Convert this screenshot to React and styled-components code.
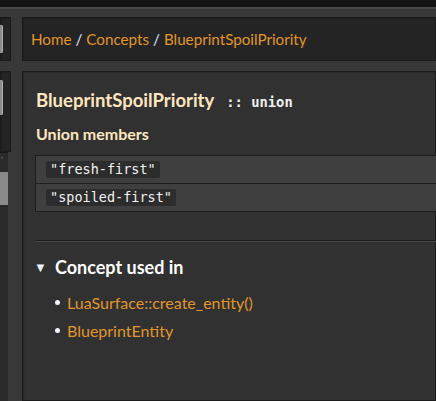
import styled, { createGlobalStyle } from 'styled-components'

const Global = createGlobalStyle`
  html, body {
    margin: 0;
    padding: 0;
    background: #383838;
    overflow: hidden;
  }
  body {
    font-family: Lato, "Noto Sans", sans-serif;
  }
`

const TopStrip = styled.div`
  height: 7px;
  background: #141414;
  border-bottom: 2px solid #474747;
`

const Frame = styled.div`
  display: grid;
  grid-template-columns: 11px 1fr;
  column-gap: 11px;
  padding-top: 8px;
  height: 392px;
  box-sizing: border-box;
`

const Side = styled.div`
  display: flex;
  flex-direction: column;
  min-width: 0;
`

const Main = styled.div`
  display: flex;
  flex-direction: column;
  gap: 10px;
  min-width: 0;
`

const Panel = styled.div`
  background: ${p => (p.dark ? '#242424' : '#313131')};
  box-shadow: inset 0 0 0 1px #1b1b1b, inset 1px 1px 2px #151515;
  overflow: hidden;
  position: relative;
`

const SideTop = styled(Panel)`
  height: 44px;
  margin-bottom: 10px;
  display: flex;
  align-items: center;
`

const SideMid = styled(Panel)`
  height: 81px;
  padding-top: 9px;
  box-sizing: border-box;
`

const SideBtn = styled.div`
  width: 3px;
  height: ${p => p.h}px;
  background: #8c8c8c;
  border-radius: 0 2px 2px 0;
  box-shadow: inset -1px 0 0 #b0b0b0;
`

const SideScroll = styled.div`
  flex: 1;
  display: flex;
  flex-direction: column;
  background: #2a2a2a;
  border-top: 1px solid #181818;
  width: 8px;
`

const ScrollArrow = styled.div`
  height: 19px;
  color: #6a6a6a;
  font-size: 8px;
  line-height: 12px;
`

const ScrollThumb = styled.div`
  height: 33px;
  background: #8a8a8a;
`

const Crumbs = styled(Panel)`
  height: 44px;
  display: flex;
  align-items: center;
  padding-left: 9px;
  font-size: 15.2px;
  color: #e8e8e8;
  white-space: nowrap;
`

const Crumb = styled.a`
  color: #e0962a;
  text-decoration: none;
`

const Sep = styled.span`
  color: #dfe8ff;
  margin: 0 4px;
`

const Content = styled(Panel)`
  flex: 1;
  padding: 18px 0 0 14px;
`

const TitleRow = styled.div`
  display: flex;
  align-items: baseline;
  gap: 12px;
`

const Title = styled.h1`
  margin: 0;
  font-size: 18.5px;
  font-weight: 700;
  color: #ffe6c0;
`

const TypeTag = styled.span`
  font-family: "DejaVu Sans Mono", monospace;
  font-size: 13.8px;
  font-weight: 600;
  color: #f0f0f0;
`

const SubHead = styled.h3`
  margin: 13px 0 12px;
  font-size: 16px;
  font-weight: 700;
  color: #ffe6c0;
`

const Table = styled.div`
  margin-left: -1px;
  border: 1px solid #1e1e1e;
  border-right: none;
  display: flex;
  flex-direction: column;
`

const Row = styled.div`
  height: 27px;
  background: #3f3f3f;
  display: flex;
  align-items: center;
  padding-left: 10px;
  border-top: ${p => (p.first ? 'none' : '1px solid #1e1e1e')};
`

const Code = styled.code`
  font-family: "DejaVu Sans Mono", monospace;
  font-size: 13.5px;
  color: #f2f2f2;
  background: #2c2c2c;
  padding: 0 4px;
  line-height: 17px;
  border-radius: 2px;
`

const Divider = styled.div`
  margin: 28px 0 0 -1px;
  height: 1px;
  background: #1c1c1c;
  border-bottom: 1px solid #474747;
`

const Section = styled.div`
  display: flex;
  align-items: center;
  gap: 9px;
  margin: 14px 0 0 -2px;
  color: #ffffff;
`

const Arrow = styled.span`
  font-size: 13px;
  width: 12px;
  color: #e8f0ff;
`

const SectionTitle = styled.h2`
  margin: 0;
  font-size: 18px;
  font-weight: 700;
`

const List = styled.ul`
  margin: 10px 0 0;
  padding-left: 19px;
  list-style: none;
`

const Item = styled.li`
  display: flex;
  align-items: center;
  gap: 7px;
  height: 28px;
  font-size: 16px;
  &::before {
    content: '';
    width: 5px;
    height: 5px;
    border-radius: 50%;
    background: #f4f6ff;
  }
`

const Link = styled.a`
  color: #e0962a;
  text-decoration: none;
`

export default function App() {
  return (
    <>
      <Global />
      <TopStrip />
      <Frame>
        <Side>
          <SideTop dark>
            <SideBtn h={28} />
          </SideTop>
          <SideMid dark>
            <SideBtn h={35} />
          </SideMid>
          <SideScroll>
            <ScrollArrow>˄</ScrollArrow>
            <ScrollThumb />
          </SideScroll>
        </Side>
        <Main>
          <Crumbs dark>
            <Crumb href="#">Home</Crumb>
            <Sep>/</Sep>
            <Crumb href="#">Concepts</Crumb>
            <Sep>/</Sep>
            <Crumb href="#">BlueprintSpoilPriority</Crumb>
          </Crumbs>
          <Content>
            <TitleRow>
              <Title>BlueprintSpoilPriority</Title>
              <TypeTag>:: union</TypeTag>
            </TitleRow>
            <SubHead>Union members</SubHead>
            <Table>
              <Row first>
                <Code>"fresh-first"</Code>
              </Row>
              <Row>
                <Code>"spoiled-first"</Code>
              </Row>
            </Table>
            <Divider />
            <Section>
              <Arrow>▼</Arrow>
              <SectionTitle>Concept used in</SectionTitle>
            </Section>
            <List>
              <Item>
                <Link href="#">LuaSurface::create_entity()</Link>
              </Item>
              <Item>
                <Link href="#">BlueprintEntity</Link>
              </Item>
            </List>
          </Content>
        </Main>
      </Frame>
    </>
  )
}
